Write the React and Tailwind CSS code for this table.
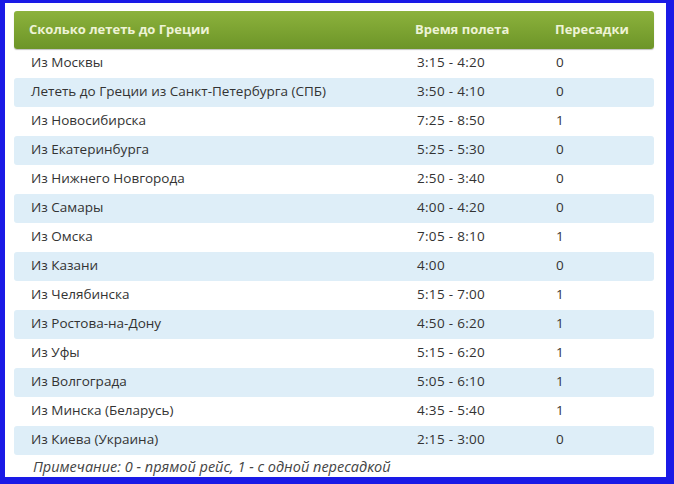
import React from 'react';

const rows = [
  ['Из Москвы', '3:15 - 4:20', '0'],
  ['Лететь до Греции из Санкт-Петербурга (СПБ)', '3:50 - 4:10', '0'],
  ['Из Новосибирска', '7:25 - 8:50', '1'],
  ['Из Екатеринбурга', '5:25 - 5:30', '0'],
  ['Из Нижнего Новгорода', '2:50 - 3:40', '0'],
  ['Из Самары', '4:00 - 4:20', '0'],
  ['Из Омска', '7:05 - 8:10', '1'],
  ['Из Казани', '4:00', '0'],
  ['Из Челябинска', '5:15 - 7:00', '1'],
  ['Из Ростова-на-Дону', '4:50 - 6:20', '1'],
  ['Из Уфы', '5:15 - 6:20', '1'],
  ['Из Волгограда', '5:05 - 6:10', '1'],
  ['Из Минска (Беларусь)', '4:35 - 5:40', '1'],
  ['Из Киева (Украина)', '2:15 - 3:00', '0'],
];

const cols = 'grid grid-cols-[386px_139px_115px]';

export default function App() {
  return (
    <div className="w-[674px] h-[484px] bg-[#1a1ae6] pt-[3px] pl-[5px] pr-[8px] pb-[7px] font-['Open_Sans',sans-serif]">
      <div className="h-full bg-white pt-[8px] pl-[9px] pr-[12px]">
        {/* шапка таблицы */}
        <div className={`${cols} h-[38px] items-center rounded-[3px] bg-gradient-to-b from-[#8cb23c] to-[#6d9528] text-[13px] font-bold text-[#eef3d6] shadow-[0_1px_1px_rgba(0,0,0,0.25)]`}>
          <div className="pl-[15px]">Сколько лететь до Греции</div>
          <div className="pl-[15px]">Время полета</div>
          <div className="pl-[16px]">Пересадки</div>
        </div>

        {rows.map((r, i) => (
          <div
            key={i}
            className={`${cols} h-[29px] items-center pb-[2px] rounded-[3px] text-[13.5px] text-[#333] ${i % 2 === 1 ? 'bg-[#deeef8]' : ''}`}
          >
            <div className="pl-[17px]">{r[0]}</div>
            <div className="pl-[17px] tracking-[0.3px]">{r[1]}</div>
            <div className="pl-[17px]">{r[2]}</div>
          </div>
        ))}

        <div className="pl-[19px] pt-[1px] text-[14.5px] italic text-[#444]">
          Примечание: 0 - прямой рейс, 1 - с одной пересадкой
        </div>
      </div>
    </div>
  );
}
